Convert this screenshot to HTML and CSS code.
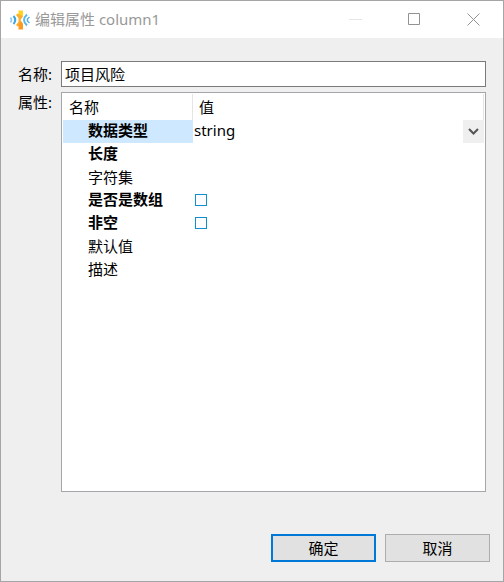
FILE: index.html
```html
<!DOCTYPE html>
<html lang="zh-CN">
	<head>
		<meta charset="UTF-8">
		<title>编辑属性 column1</title>
		<link rel="stylesheet" href="styles.css">
	</head>
	
	<body>
		<div class="dialog">
			<!--标题栏-->
			<div class="titlebar">
				<svg class="logo" viewBox="0 0 22 22">
					<path d="M9.500 1.500H14V7l-2 2-2.500-2z" fill="#ffd21c"/>
					<path d="M7 6l1.500-1.500L14 7.500 11.500 11l2.500 3.500-5.500 3L7 16l2.500-3v-4z" fill="#fdae2a"/>
					<path d="M11.500 12.500L14 15v5.500H9.500v-5z" fill="#fb9a1e"/>
					<path d="M4.500 7q3.500 4 0 8" fill="none" stroke="#3ba6e3" stroke-width="2"/>
					<path d="M1.500 8.500q2 2.500 0 5" fill="none" stroke="#8ccdf0" stroke-width="1.500"/>
					<path d="M18 5.500Q12 11 18 16.500" fill="none" stroke="#5db9ea" stroke-width="2"/>
					<path d="M20.500 8Q16 11 20.500 14" fill="none" stroke="#4aaee6" stroke-width="1.500"/>
				</svg>
				<h1 class="title">编辑属性 column1</h1>
				<button class="winBtn min" type="button" aria-label="最小化">
					<svg viewBox="0 0 13 13"><path d="M0 6.500h13"/></svg>
				</button>
				<button class="winBtn" type="button" aria-label="最大化">
					<svg viewBox="0 0 13 13"><path d="M.5 .5h11v11H.5z"/></svg>
				</button>
				<button class="winBtn" type="button" aria-label="关闭">
					<svg viewBox="0 0 13 13"><path d="M.5 .5l12 12M12.500 .5l-12 12"/></svg>
				</button>
			</div>
			
			<!--表单-->
			<form class="form">
				<label class="label" for="name">名称:</label>
				<input class="nameInput" id="name" type="text" value="项目风险">
				
				<span class="label" id="propsLabel">属性:</span>
				<div class="tree">
					<table class="props" aria-labelledby="propsLabel">
						<thead>
							<tr><th class="key">名称</th><th>值</th></tr>
						</thead>
						<tbody>
							<tr class="active">
								<td class="required"><label for="type">数据类型</label></td>
								<td>
									<div class="combo">
										<select id="type"><option>string</option></select>
										<svg class="arrow" viewBox="0 0 21 23"><path d="M6 9l4.500 4.500L15 9"/></svg>
									</div>
								</td>
							</tr>
							<tr><td class="required">长度</td><td></td></tr>
							<tr><td>字符集</td><td></td></tr>
							<tr>
								<td class="required"><label for="isArray">是否是数组</label></td>
								<td><input class="check" id="isArray" type="checkbox"></td>
							</tr>
							<tr>
								<td class="required"><label for="notNull">非空</label></td>
								<td><input class="check" id="notNull" type="checkbox"></td>
							</tr>
							<tr><td>默认值</td><td></td></tr>
							<tr><td>描述</td><td></td></tr>
						</tbody>
					</table>
				</div>
			</form>
			
			<!--按钮-->
			<div class="footer">
				<button class="btn ok" type="button">确定</button>
				<button class="btn" type="button">取消</button>
			</div>
		</div>
	</body>
</html>
```

FILE: styles.css
```css
*{
	margin: 0;
	padding: 0;
	box-sizing: border-box;
}
body,input,select,button{
	font-family: "Noto Sans", "Noto Sans CJK SC", sans-serif;
	font-size: 15px;
	color: #000;
}
.dialog{
	display: flex;
	flex-direction: column;
	min-height: 100vh;
	border: 1px solid #a5a5a8;
	background: #efefef;
}
/* 标题栏 */
.titlebar{
	display: flex;
	align-items: center;
	height: 37px;
	padding-left: 8px;
	background: #fff;
}
.titlebar .logo{
	width: 22px;
	height: 22px;
	margin-right: 4px;
}
.titlebar .title{
	flex: 1;
	padding-bottom: 2px;
	font-size: 15px;
	font-weight: normal;
	line-height: 20px;
	color: #999;
}
.titlebar .winBtn{
	display: flex;
	align-items: center;
	justify-content: center;
	width: 59px;
	height: 37px;
	border: 0;
	background: none;
}
.winBtn svg{
	width: 13px;
	height: 13px;
	fill: none;
	stroke: #929292;
}
.winBtn.min svg{
	stroke: #e5e5e5;
}
/* 表单 */
.form{
	flex: 1;
	display: grid;
	grid-template-columns: 43px 1fr;
	grid-template-rows: 26px 1fr;
	row-gap: 5px;
	padding: 23px 17px 0;
}
.form .label{
	line-height: 20px;
}
.form .label[for]{
	line-height: 26px;
}
.nameInput{
	width: 100%;
	padding: 0 3px 2px;
	border: 1px solid #7a7a7a;
	background: #fff;
	outline: none;
}
/* 属性表 */
.tree{
	padding: 1px;
	border: 1px solid #a5a6ab;
	background: #fff;
}
.props{
	width: 100%;
	table-layout: fixed;
	border-collapse: separate;
	border-spacing: 0;
	line-height: 20px;
}
.props th{
	height: 26px;
	padding-left: 6px;
	border-right: 1px solid #e5e5e5;
	text-align: left;
	font-weight: normal;
}
.props .key{
	width: 130px;
}
.props td{
	height: 23px;
	padding-left: 1px;
}
.props td:first-child{
	padding-left: 25px;
	padding-bottom: 2px;
}
.props td.required{
	padding-bottom: 3px;
	font-weight: bold;
}
.props .active td:first-child{
	background: #cde8ff;
}
.combo{
	position: relative;
	height: 23px;
}
.combo select{
	display: block;
	width: 100%;
	height: 23px;
	padding-bottom: 3px;
	border: 0;
	background: #fff;
	appearance: none;
	outline: none;
}
.combo .arrow{
	position: absolute;
	top: 0;
	right: 0;
	width: 21px;
	height: 23px;
	background: #efefef;
	fill: none;
	stroke: #555;
	stroke-width: 2;
	pointer-events: none;
}
.check{
	display: block;
	width: 12px;
	height: 12px;
	margin: 0 0 1px 1px;
	border: 1px solid #0e8fcf;
	background: #fff;
	appearance: none;
}
.check:checked{
	background: #0e8fcf;
}
/* 底部按钮 */
.footer{
	display: flex;
	justify-content: flex-end;
	gap: 9px;
	padding: 42px 13px 19px;
}
.btn{
	width: 105px;
	height: 28px;
	padding-bottom: 2px;
	border: 1px solid #adadad;
	background: #e1e1e1;
}
.btn.ok{
	border: 2px solid #0078d7;
}
```
